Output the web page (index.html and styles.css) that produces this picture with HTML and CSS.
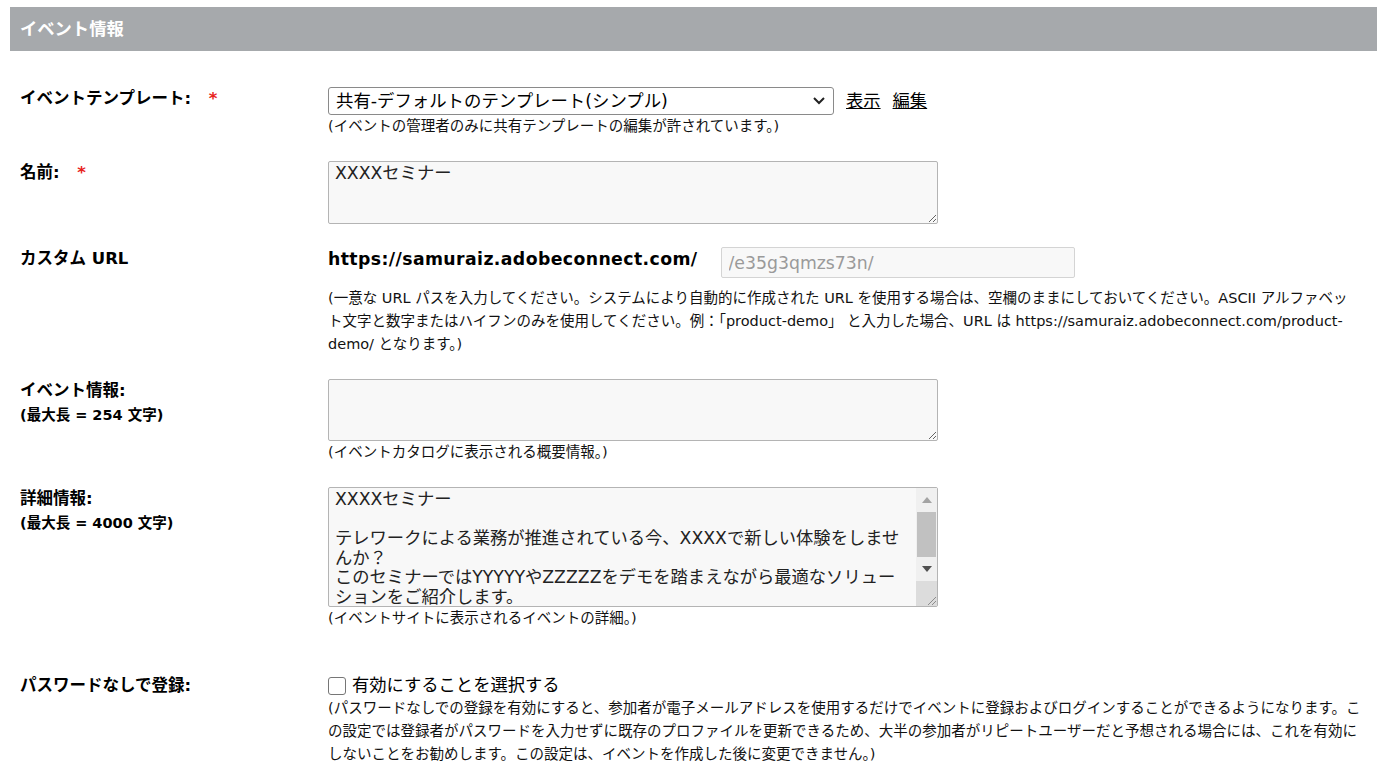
FILE: index.html
```html
<!DOCTYPE html>
<html lang="ja">
<head>
    <meta charset="UTF-8">
    <title>イベント情報</title>
    <link rel="stylesheet" href="styles.css">
</head>
<body>
    <div class="page">
        <div class="section-head">イベント情報</div>

        <div class="form">
            <div class="row">
                <div class="label">イベントテンプレート: <span class="req">*</span></div>
                <div class="field">
                    <div class="inline">
                        <select class="template-select">
                            <option>共有-デフォルトのテンプレート(シンプル)</option>
                        </select>
                        <a href="#" class="link">表示</a>
                        <a href="#" class="link">編集</a>
                    </div>
                    <div class="hint">(イベントの管理者のみに共有テンプレートの編集が許されています。)</div>
                </div>
            </div>

            <div class="row">
                <div class="label">名前: <span class="req">*</span></div>
                <div class="field">
                    <textarea class="text-box name-box">XXXXセミナー</textarea>
                </div>
            </div>

            <div class="row">
                <div class="label">カスタム URL</div>
                <div class="field">
                    <div class="inline url-line">
                        <span class="url-base">https://samuraiz.adobeconnect.com/</span>
                        <input type="text" class="url-input" placeholder="/e35g3qmzs73n/">
                    </div>
                    <div class="hint url-hint">(一意な URL パスを入力してください。システムにより自動的に作成された URL を使用する場合は、空欄のままにしておいてください。ASCII アルファベット文字と数字またはハイフンのみを使用してください。例：「product-demo」 と入力した場合、URL は https://samuraiz.adobeconnect.com/product-demo/ となります。)</div>
                </div>
            </div>

            <div class="row">
                <div class="label">
                    イベント情報:
                    <div class="sub-label">(最大長 = 254 文字)</div>
                </div>
                <div class="field">
                    <textarea class="text-box summary-box"></textarea>
                    <div class="hint">(イベントカタログに表示される概要情報。)</div>
                </div>
            </div>

            <div class="row">
                <div class="label">
                    詳細情報:
                    <div class="sub-label">(最大長 = 4000 文字)</div>
                </div>
                <div class="field">
                    <div class="details-wrap">
<textarea class="details-box">XXXXセミナー

テレワークによる業務が推進されている今、XXXXで新しい体験をしませんか？
このセミナーではYYYYYやZZZZZをデモを踏まえながら最適なソリューションをご紹介します。

ぜひご参加ください。</textarea>
                        <div class="scrollbar">
                            <div class="sb-btn sb-up">
                                <svg width="10" height="6" viewBox="0 0 10 6"><polygon points="0,6 10,6 5,0" fill="#a3a3a3"/></svg>
                            </div>
                            <div class="sb-track"><div class="sb-thumb"></div></div>
                            <div class="sb-btn sb-down">
                                <svg width="10" height="6" viewBox="0 0 10 6"><polygon points="0,0 10,0 5,6" fill="#505050"/></svg>
                            </div>
                            <div class="sb-corner">
                                <svg width="12" height="12" viewBox="0 0 12 12" stroke="#8c8c8c" stroke-width="1"><line x1="11" y1="3" x2="3" y2="11"/><line x1="11" y1="7" x2="7" y2="11"/></svg>
                            </div>
                        </div>
                    </div>
                    <div class="hint">(イベントサイトに表示されるイベントの詳細。)</div>
                </div>
            </div>

            <div class="row row-password">
                <div class="label">パスワードなしで登録:</div>
                <div class="field">
                    <label class="check-line">
                        <input type="checkbox" class="check">
                        有効にすることを選択する
                    </label>
                    <div class="hint">(パスワードなしでの登録を有効にすると、参加者が電子メールアドレスを使用するだけでイベントに登録およびログインすることができるようになります。この設定では登録者がパスワードを入力せずに既存のプロファイルを更新できるため、大半の参加者がリピートユーザーだと予想される場合には、これを有効にしないことをお勧めします。この設定は、イベントを作成した後に変更できません。)</div>
                </div>
            </div>
        </div>
    </div>
</body>
</html>
```

FILE: styles.css
```css
:root {
    --head-bg: #a6a9ac;
    --text-color: #000000;
    --hint-color: #111111;
    --field-bg: #f8f8f8;
    --field-border: #b4b4b4;
    --req-color: #e8221b;
}

* {
    margin: 0;
    padding: 0;
    box-sizing: border-box;
}

body {
    font-family: "DejaVu Sans", "Noto Sans CJK JP", sans-serif;
    background-color: #ffffff;
    color: var(--text-color);
}

.page {
    padding: 7px 10px 0;
}

.section-head {
    background-color: var(--head-bg);
    color: #ffffff;
    font-size: 17.3px;
    font-weight: 700;
    height: 44px;
    line-height: 44px;
    padding-left: 10px;
}

.form {
    padding: 36px 10px 0;
}

.row {
    display: grid;
    grid-template-columns: 308px 1fr;
    margin-bottom: 23px;
}

.row-password {
    margin-top: 44px;
}

.label {
    font-size: 16.5px;
    font-weight: 700;
    line-height: 24px;
}

.req {
    color: var(--req-color);
    margin-left: 12px;
}

.sub-label {
    font-size: 14.5px;
    line-height: 24px;
}

.field {
    min-width: 0;
}

.inline {
    display: flex;
    align-items: center;
}

.hint {
    font-size: 14.5px;
    line-height: 23px;
    color: var(--hint-color);
}

/* template select */
.template-select {
    appearance: none;
    width: 506px;
    height: 28px;
    padding: 0 30px 0 7px;
    font-family: inherit;
    font-size: 17.4px;
    color: #000;
    border: 1px solid #8a8a8a;
    border-radius: 3px;
    background-color: #ffffff;
    background-image: url("data:image/svg+xml,%3Csvg xmlns='http://www.w3.org/2000/svg' width='14' height='10' viewBox='0 0 14 10' fill='none' stroke='%23222' stroke-width='2'%3E%3Cpolyline points='2 2 7 7 12 2'/%3E%3C/svg%3E");
    background-repeat: no-repeat;
    background-position: right 7px center;
}

.link {
    color: #000;
    font-size: 17.3px;
    line-height: 24px;
    margin-left: 12px;
    text-decoration: underline;
}

/* text areas */
.text-box {
    display: block;
    width: 610px;
    padding: 2px 6px;
    font-family: inherit;
    font-size: 17.3px;
    line-height: 19.5px;
    color: #222;
    background-color: var(--field-bg);
    border: 1px solid var(--field-border);
    border-radius: 2px;
    resize: both;
}

.name-box {
    height: 63px;
}

.summary-box {
    height: 62px;
}

.details-wrap {
    display: flex;
    width: 610px;
    height: 120px;
    background-color: var(--field-bg);
    border: 1px solid var(--field-border);
    border-radius: 2px;
}

.details-box {
    flex: 1;
    padding: 2px 6px;
    font-family: inherit;
    font-size: 17.3px;
    line-height: 19.5px;
    color: #222;
    background: transparent;
    border: none;
    outline: none;
    resize: none;
    overflow: hidden;
}

/* fake scrollbar of the details box */
.scrollbar {
    width: 21px;
    display: flex;
    flex-direction: column;
    background-color: #f0f0f0;
}

.sb-btn {
    height: 24px;
    display: flex;
    align-items: center;
    justify-content: center;
}

.sb-track {
    height: 45px;
    padding: 0 1px;
}

.sb-thumb {
    height: 100%;
    background-color: #c1c1c1;
}

.sb-corner {
    flex: 1;
    background-color: #dcdcdc;
    display: flex;
    align-items: flex-end;
    justify-content: flex-end;
}

/* custom url */
.url-line {
    align-items: flex-start;
}

.url-base {
    font-size: 17.3px;
    font-weight: 700;
    line-height: 24px;
    letter-spacing: 0.4px;
}

.url-input {
    width: 354px;
    height: 31px;
    margin-left: 23px;
    padding: 0 7px;
    font-family: inherit;
    font-size: 17.3px;
    background-color: var(--field-bg);
    border: 1px solid #d4d4d4;
    border-radius: 2px;
}

.url-input::placeholder {
    color: #9a9a9a;
}

.url-hint {
    margin-top: 9px;
    padding-right: 9px;
}

/* checkbox */
.check-line {
    display: flex;
    align-items: center;
    font-size: 17.3px;
    line-height: 23px;
}

.check {
    appearance: none;
    width: 18px;
    height: 18px;
    margin-right: 6px;
    border: 1px solid #767676;
    border-radius: 3px;
    background-color: #ffffff;
}
```
